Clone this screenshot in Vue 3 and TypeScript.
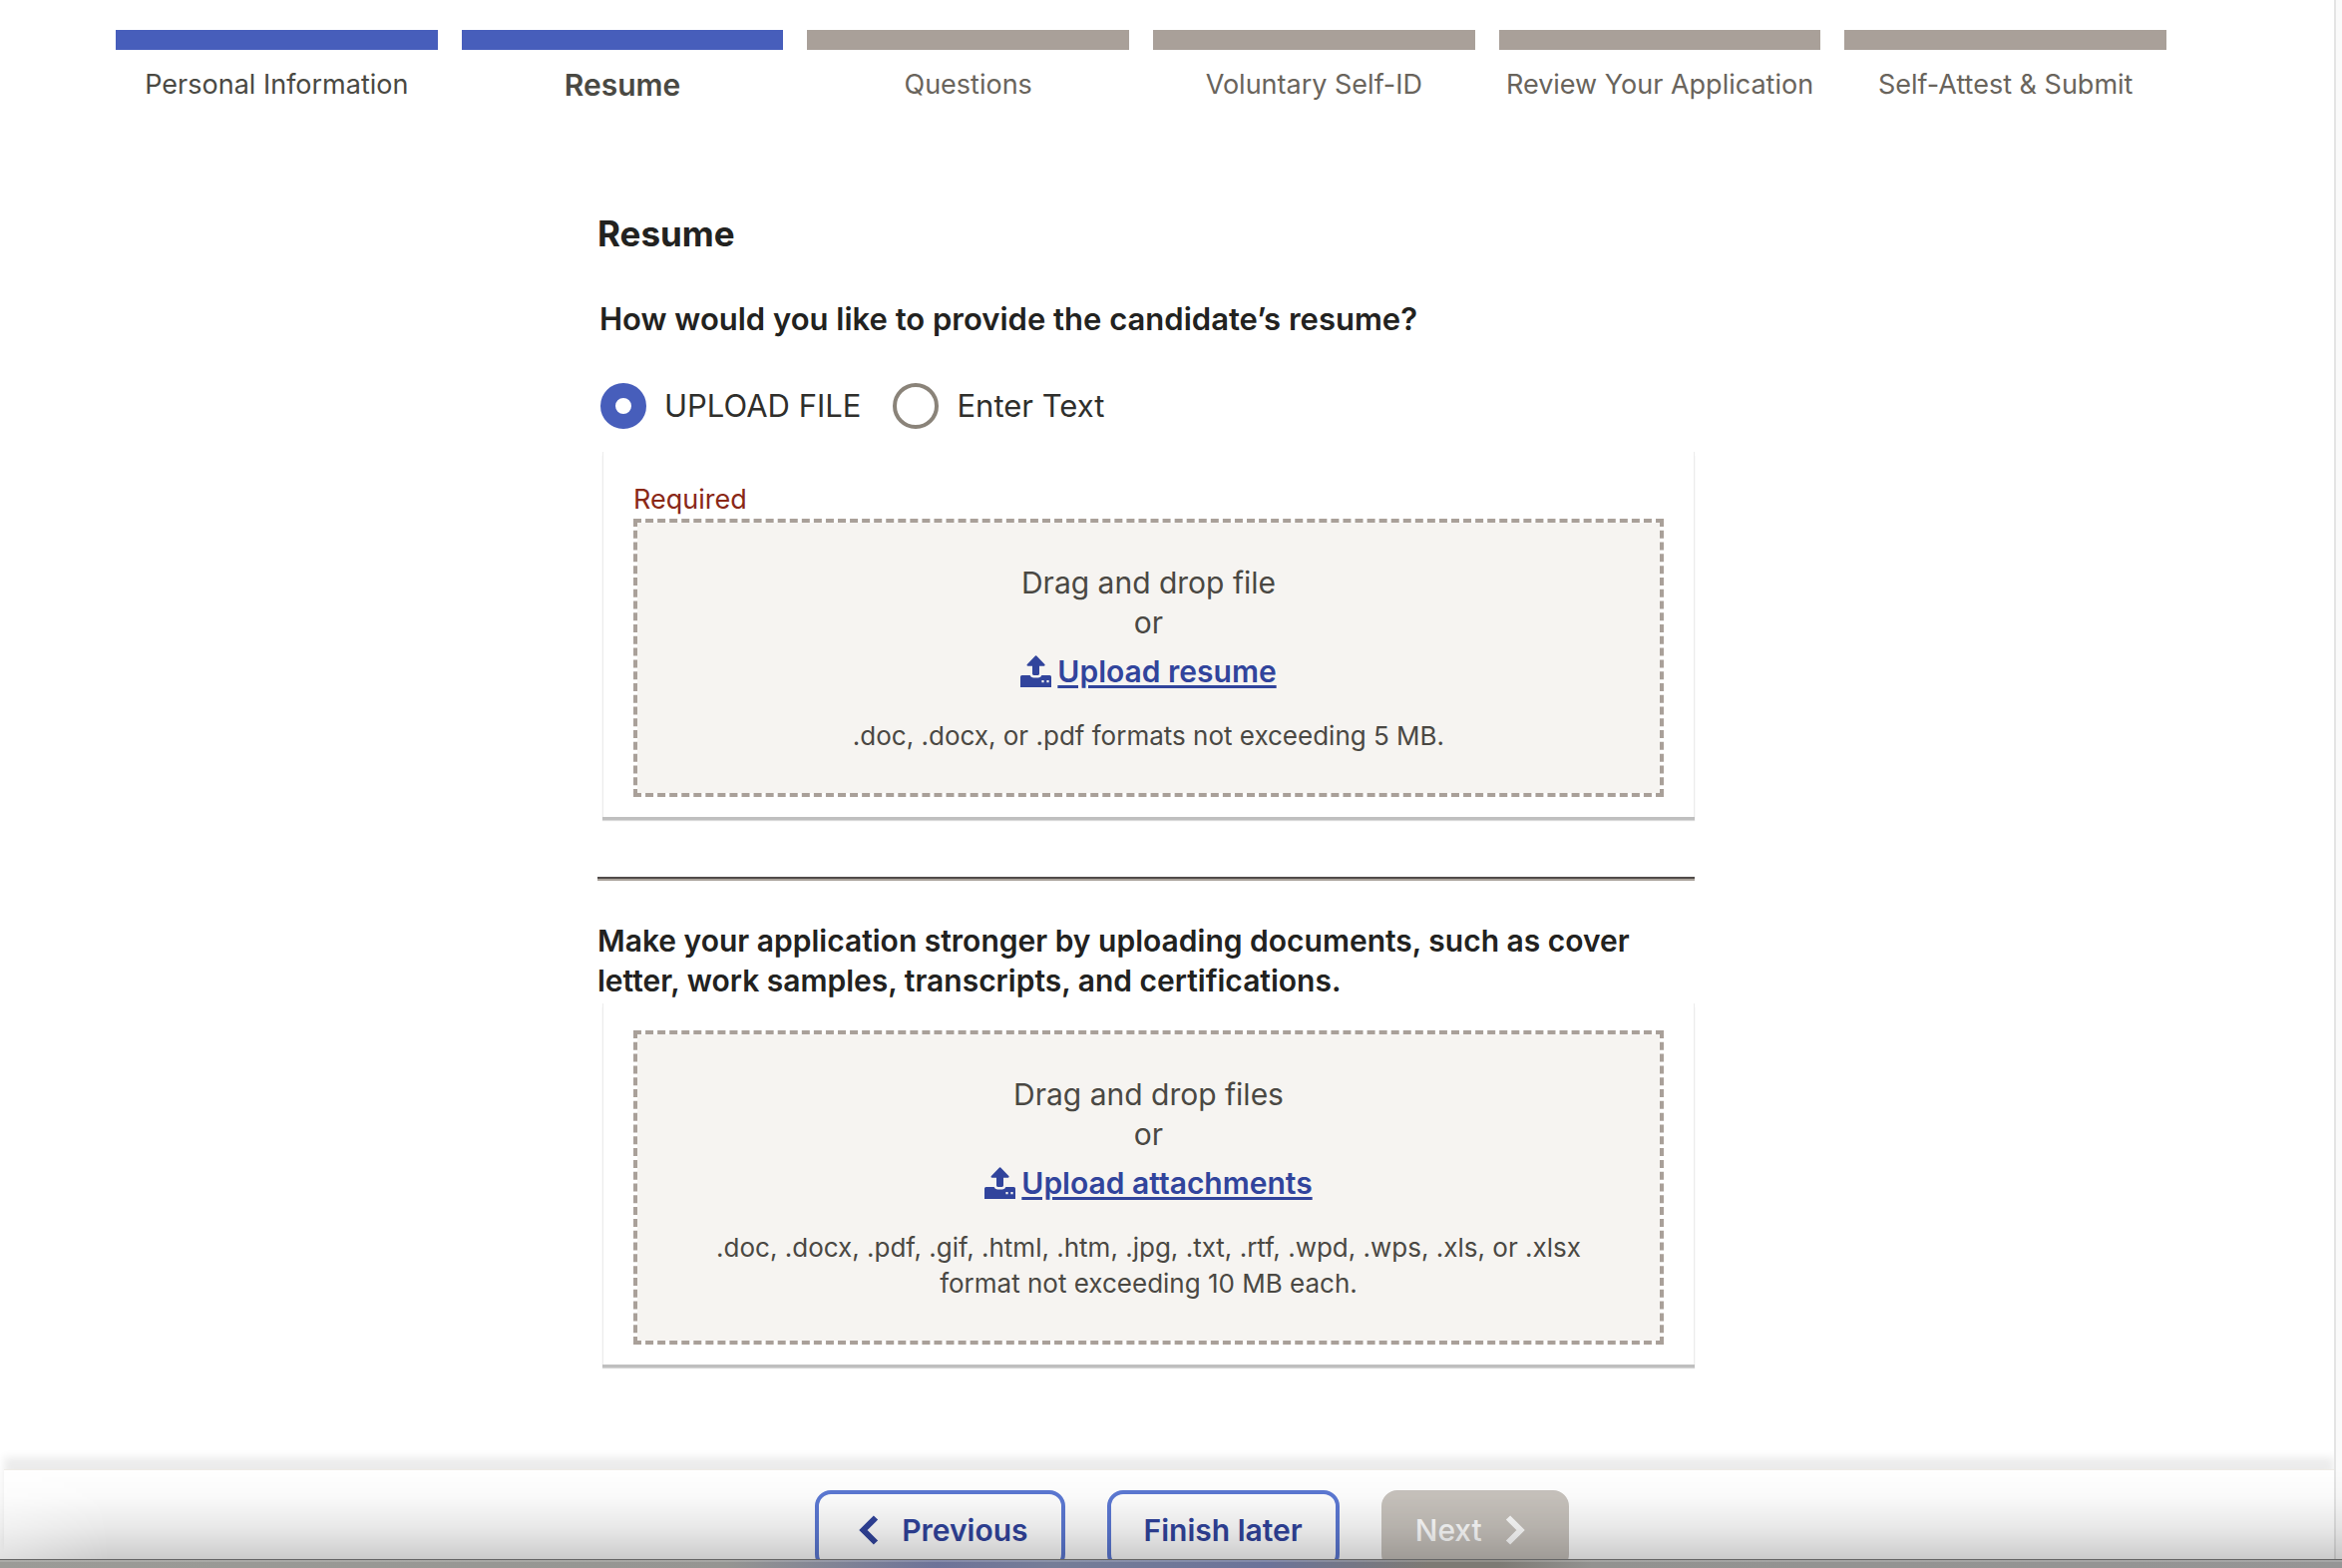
<script setup lang="ts">
import { ref } from 'vue'

interface Step {
  label: string
  state: 'done' | 'current' | 'todo'
}

interface Zone {
  prompt: string
  action: string
  hint: string
}

const steps: Step[] = [
  { label: 'Personal Information', state: 'done' },
  { label: 'Resume', state: 'current' },
  { label: 'Questions', state: 'todo' },
  { label: 'Voluntary Self-ID', state: 'todo' },
  { label: 'Review Your Application', state: 'todo' },
  { label: 'Self-Attest & Submit', state: 'todo' },
]

const method = ref('file')

const resumeZone: Zone = {
  prompt: 'Drag and drop file',
  action: 'Upload resume',
  hint: '.doc, .docx, or .pdf formats not exceeding 5 MB.',
}

const attachmentZone: Zone = {
  prompt: 'Drag and drop files',
  action: 'Upload attachments',
  hint: '.doc, .docx, .pdf, .gif, .html, .htm, .jpg, .txt, .rtf, .wpd, .wps, .xls, or .xlsx format not exceeding 10 MB each.',
}

const sections = [
  { zone: resumeZone, required: true },
  { zone: attachmentZone, required: false },
]
</script>

<template>
  <div class="window">
    <div class="viewport">
      <div class="page">
        <nav class="progress" aria-label="Application progress">
          <ol class="steps">
            <li v-for="step in steps" :key="step.label" class="step" :class="step.state">
              <span class="bar"></span>
              <span class="step-label">{{ step.label }}</span>
            </li>
          </ol>
        </nav>

        <main class="main">
          <div class="column">
            <h1 class="title">Resume</h1>
            <fieldset class="methods">
              <legend class="question">How would you like to provide the candidate’s resume?</legend>
              <div class="options">
                <label class="option">
                  <input v-model="method" class="radio" type="radio" name="method" value="file" />
                  <span>UPLOAD FILE</span>
                </label>
                <label class="option">
                  <input v-model="method" class="radio" type="radio" name="method" value="text" />
                  <span>Enter Text</span>
                </label>
              </div>
            </fieldset>

            <template v-for="section in sections" :key="section.zone.action">
              <template v-if="!section.required">
                <hr class="rule" />
                <h2 class="pitch">
                  Make your application stronger by uploading documents, such as cover letter, work
                  samples, transcripts, and certifications.
                </h2>
              </template>
              <section class="panel" :class="{ mandatory: section.required }">
                <p v-if="section.required" class="required">Required</p>
                <div class="zone">
                  <p class="prompt">{{ section.zone.prompt }}<br />or</p>
                  <a class="upload" href="#">
                    <svg class="upload-icon" viewBox="0 0 31 32" aria-hidden="true">
                      <path
                        d="M15 0.6 Q15.6 0 16.2 0.6 L24.6 9.2 Q25 10.6 23.6 10.8 H19 V18.6 Q19 20 17.6 20 H13.4 Q12 20 12 18.6 V10.8 H7.6 Q6 10.6 6.6 9.2 Z"
                      />
                      <path
                        fill-rule="evenodd"
                        d="M1.6 20 H9.6 Q10.4 22.4 13 22.4 H18 Q20.6 22.4 21.4 20 H29.4 Q31 20 31 21.6 V32 H0 V21.6 Q0 20 1.6 20 Z M21.4 25 V27.2 H23.6 V25 Z M26.4 25 V27.2 H28.6 V25 Z"
                      />
                    </svg>
                    <span class="upload-text">{{ section.zone.action }}</span>
                  </a>
                  <p class="hint">{{ section.zone.hint }}</p>
                </div>
              </section>
            </template>
          </div>
        </main>

        <footer class="actions">
          <button class="button previous" type="button">
            <svg class="chevron" viewBox="0 0 20 30" aria-hidden="true">
              <path d="M17 2.5 L4.5 15 L17 27.5" />
            </svg>
            <span>Previous</span>
          </button>
          <button class="button" type="button">Finish later</button>
          <button class="button next" type="button" disabled>
            <span>Next</span>
            <svg class="chevron" viewBox="0 0 20 30" aria-hidden="true">
              <path d="M3 2.5 L15.5 15 L3 27.5" />
            </svg>
          </button>
        </footer>
      </div>
      <div class="scroll-track"></div>
      <div class="shade"></div>
    </div>
    <div class="edge"></div>
  </div>
</template>

<style>
body {
  margin: 0;
  background: #ffffff;
}
</style>

<style scoped>
.window {
  display: flex;
  flex-direction: column;
  min-height: 100vh;
  font-family: Inter, 'Liberation Sans', sans-serif;
  font-size: 30px;
  line-height: 40px;
  color: #222220;
}

.viewport {
  position: relative;
  display: flex;
  flex: 1;
}

.page {
  display: flex;
  flex: 1;
  flex-direction: column;
  min-width: 0;
}

.scroll-track {
  box-sizing: border-box;
  width: 8px;
  border-left: 2px solid #e4e4e4;
  background: #fafafa;
}

.progress {
  padding: 30px 168px 0 116px;
}

.steps {
  display: flex;
  gap: 24px;
  margin: 0;
  padding: 0;
  list-style: none;
}

.step {
  display: flex;
  flex: 1 1 0;
  flex-direction: column;
  gap: 15px;
  min-width: 0;
  font-size: 27px;
  text-align: center;
  white-space: nowrap;
  color: #69645c;
}

.bar {
  height: 20px;
  background: #a9a099;
}

.done .bar,
.current .bar {
  background: #475ebb;
}

.done {
  color: #4a4943;
}

.current {
  font-size: 30px;
  font-weight: 600;
  color: #4a4943;
}

.main {
  padding: 109px 168px 0 126px;
}

.column {
  max-width: 1100px;
  margin: 0 auto;
}

.title {
  margin: 0;
  font-size: 35px;
  font-weight: 700;
  line-height: 40px;
}

.methods {
  margin: 46px 0 0;
  padding: 0;
  border: 0;
}

.question {
  padding: 0 0 0 2px;
  font-size: 31px;
  font-weight: 600;
}

.options {
  display: flex;
  gap: 32px;
  padding: 44px 0 0 3px;
  font-size: 31px;
}

.option {
  display: flex;
  align-items: center;
  gap: 18px;
  height: 46px;
  color: #2f2f2c;
}

.radio {
  box-sizing: border-box;
  width: 46px;
  height: 46px;
  margin: 0;
  border: 4px solid #8a8379;
  border-radius: 50%;
  background: #ffffff;
  appearance: none;
}

.radio:checked {
  border: 15px solid #475ebb;
}

.panel {
  box-sizing: border-box;
  margin-left: 5px;
  padding: 27px 30px 20px;
  border: solid #ececec;
  border-width: 0 1px;
  box-shadow: 0 3px 0 #bfbfbf, 0 4px 1px #d8d8d8;
}

.mandatory {
  margin-top: 23px;
  padding-top: 29px;
}

.required {
  margin: 0;
  font-size: 27px;
  line-height: 38px;
  color: #8a2817;
}

.zone {
  display: flex;
  flex-direction: column;
  align-items: center;
  padding: 40px 60px 39px;
  border: 4px dashed #a9a099;
  background: #f6f4f1;
  background-clip: padding-box;
  text-align: center;
  color: #4a4843;
}

.prompt {
  margin: 0;
}

.upload {
  display: flex;
  align-items: center;
  gap: 6px;
  margin-top: 9px;
  font-weight: 600;
  color: #31449c;
  text-decoration: none;
}

.upload-icon {
  width: 31px;
  height: 32px;
  fill: #31449c;
}

.upload-text {
  text-decoration: underline;
  text-decoration-thickness: 3px;
  text-underline-offset: 3px;
}

.hint {
  margin: 27px 0 0;
  font-size: 26px;
  line-height: 36px;
}

.rule {
  margin: 60px 0 40px;
  border: 0;
  border-top: 2px solid #504b49;
  border-bottom: 2px solid #a8a098;
}

.pitch {
  margin: 0 0 3px;
  font-size: 30px;
  font-weight: 600;
  line-height: 40px;
}

.actions {
  display: flex;
  justify-content: center;
  gap: 42px;
  height: 69px;
  margin: auto 0 0 4px;
  padding: 20px 0 0 46px;
  clip-path: inset(-24px 0 0 -4px);
  border-top: 1px solid #efece6;
  background: #ffffff;
  box-shadow: 0 -12px 8px rgba(0, 0, 0, 0.08);
}

.button {
  box-sizing: border-box;
  display: flex;
  align-items: center;
  gap: 23px;
  height: 80px;
  padding: 0 33px;
  border: 4px solid #5c79d4;
  border-radius: 16px;
  background: #ffffff;
  font: inherit;
  font-weight: 600;
  color: #31449c;
}

.previous {
  padding-left: 40px;
}

.next {
  padding: 0 40px 0 30px;
  border-color: #c8c3bd;
  background: #c8c3bd;
  font-weight: 500;
  color: #ffffff;
}

.chevron {
  width: 20px;
  height: 30px;
  fill: none;
  stroke: currentColor;
  stroke-width: 6px;
}

.shade {
  position: absolute;
  right: 0;
  bottom: 0;
  left: 0;
  height: 90px;
  background: linear-gradient(
    rgba(0, 0, 0, 0),
    rgba(0, 0, 0, 0.02) 30%,
    rgba(0, 0, 0, 0.09) 65%,
    rgba(0, 0, 0, 0.2)
  );
  mask-image: linear-gradient(90deg, rgba(0, 0, 0, 0.6), #000000 110px);
  pointer-events: none;
}

.edge {
  box-sizing: border-box;
  height: 9px;
  border-top: 1px solid #666666;
  background:
    linear-gradient(rgba(255, 255, 255, 0.16) 2px, rgba(255, 255, 255, 0) 2px),
    linear-gradient(
      90deg,
      #9b9b97,
      #959592 31%,
      #6d7398 40%,
      #757d97 45%,
      #6b7399 54%,
      #7d7a74 61%,
      #7d7a74 64%,
      #929290 68%,
      #959595
    );
}
</style>
